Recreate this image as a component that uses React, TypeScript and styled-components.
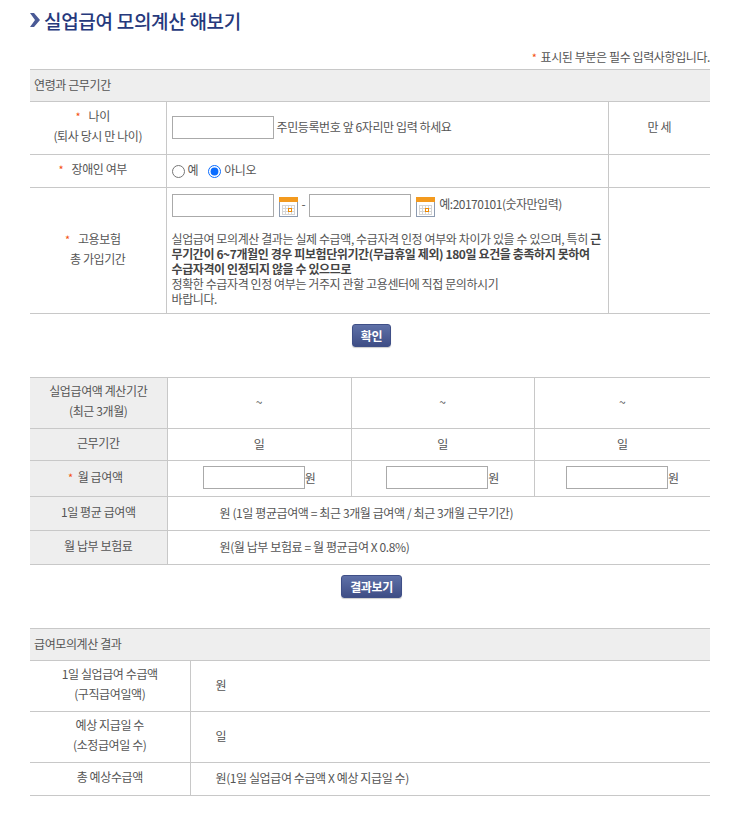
import styled, { createGlobalStyle } from "styled-components";

const GlobalStyle = createGlobalStyle`
  html, body {
    margin: 0;
    padding: 0;
    background: #fff;
  }
  body {
    font-family: "Noto Sans CJK KR", "Noto Sans", sans-serif;
    font-size: 12px;
    letter-spacing: -0.4px;
    color: #555;
  }
`;

const Page = styled.div`
  width: 680px;
  padding: 6px 33px 0 30px;
`;

const Title = styled.h1`
  display: flex;
  align-items: center;
  gap: 4px;
  margin: 0;
  height: 28px;
  font-size: 19px;
  font-weight: 500;
  color: #26397c;
  letter-spacing: -0.3px;
`;

const Notice = styled.p`
  margin: 14px 0 0;
  height: 21px;
  line-height: 18px;
  text-align: right;
`;

const Star = styled.span<{ $gap?: number; $lead?: number }>`
  color: #f4500f;
  font-size: 11px;
  margin-left: ${(p) => p.$lead ?? 0}px;
  margin-right: ${(p) => p.$gap ?? 6}px;
`;

const Table = styled.table`
  width: 680px;
  table-layout: fixed;
  border-collapse: collapse;
  border-top: 1px solid #c8c8c8;
`;

const Row = styled.tr<{ $h: number }>`
  height: ${(p) => p.$h}px;
  border-bottom: 1px solid #c8c8c8;
`;

const Caption = styled.th`
  background: #eee;
  font-weight: 400;
  text-align: left;
  padding: 0 0 2px 4px;
`;

const Label = styled.th<{ $shade?: boolean }>`
  font-weight: 400;
  text-align: center;
  line-height: 20px;
  padding: 0 0 4px;
  border-right: 1px solid #c8c8c8;
  background: ${(p) => (p.$shade ? "#eee" : "transparent")};
`;

const Cell = styled.td<{ $center?: boolean; $pl?: number; $line?: boolean }>`
  padding: 0 0 3px ${(p) => p.$pl ?? 0}px;
  text-align: ${(p) => (p.$center ? "center" : "left")};
  border-right: ${(p) => (p.$line ? "1px solid #c8c8c8" : "none")};
`;

const FieldCell = styled(Cell)`
  padding-bottom: 1px;
`;

const Inline = styled.div`
  display: flex;
  align-items: center;
  gap: 3px;
`;

const CenteredInline = styled(Inline)`
  justify-content: center;
  gap: 0;
`;

const TextInput = styled.input`
  box-sizing: border-box;
  width: 102px;
  height: 23px;
  margin: 0;
  padding: 0 3px;
  border: 1px solid #aaa;
  background: #fff;
`;

const Radio = styled.input`
  width: 13px;
  height: 13px;
  margin: 2px 3px 0 0;
  accent-color: #0a6cff;
`;

const RadioLabel = styled.label`
  display: flex;
  align-items: center;
  margin-right: 7px;
`;

const NudgedText = styled.span`
  margin-top: -2px;
`;

const DateCell = styled.td`
  padding: 5px 4px 6px 5px;
  vertical-align: top;
  border-right: 1px solid #c8c8c8;
`;

const DateInputs = styled(Inline)`
  height: 24px;
  margin-bottom: 14px;
  gap: 0;
`;

const CalIcon = styled.svg`
  margin: 3px 3px 0 5px;
  flex: none;
`;

const Dash = styled.span`
  margin: -4px 4px 0 0;
`;

const Hint = styled.span`
  margin-top: -4px;
  letter-spacing: -0.5px;
`;

const Guide = styled.p`
  margin: 0;
  line-height: 15px;
  white-space: nowrap;
  b {
    font-weight: 700;
    color: #444;
  }
`;

const Actions = styled.div`
  display: flex;
  justify-content: center;
  box-sizing: border-box;
  padding: 10px 0 0 3px;
  height: 63px;
`;

const Button = styled.button`
  height: 23px;
  padding: 0 8px;
  border: 1px solid #3f4f87;
  border-radius: 3px;
  background: linear-gradient(#5f71a8, #3e4d85);
  color: #fff;
  font: 700 12px "Noto Sans CJK KR", sans-serif;
  letter-spacing: -0.4px;
  box-shadow: 0 1px 1px rgba(0, 0, 0, 0.2);
`;

const Calendar = () => (
  <CalIcon width="20" height="20" viewBox="0 0 20 20">
    <rect x="0.5" y="0.5" width="18" height="19" fill="#fff" stroke="#8d9bb0" />
    <rect x="0" y="0" width="19" height="5" fill="#f39a1e" />
    <path d="M3 8.5h13M3 11.5h13M3 14.5h13M3 17.5h13M3.5 8v10M6.5 8v10M9.5 8v10M12.5 8v10M15.5 8v10" stroke="#d5d5d5" />
    <rect x="9.5" y="11.5" width="3" height="3" fill="#fff" stroke="#f08a00" />
  </CalIcon>
);

const Chevron = () => (
  <svg width="10" height="14" viewBox="0 0 10 14">
    <path d="M0 0h4l6 7-6 7H0l5-7z" fill="#4a5a96" />
  </svg>
);

const SalaryField = () => (
  <CenteredInline>
    <TextInput />
    <span>원</span>
  </CenteredInline>
);

export default function App() {
  return (
    <Page>
      <GlobalStyle />
      <Title>
        <Chevron />
        실업급여 모의계산 해보기
      </Title>
      <Notice>
        <Star $gap={4}>*</Star>표시된 부분은 필수 입력사항입니다.
      </Notice>

      <Table>
        <colgroup>
          <col width="136" />
          <col width="442" />
          <col width="102" />
        </colgroup>
        <tbody>
          <Row $h={32}>
            <Caption colSpan={3}>연령과 근무기간</Caption>
          </Row>
          <Row $h={53}>
            <Label>
              <Star $lead={-10}>*</Star> 나이
              <br />
              (퇴사 당시 만 나이)
            </Label>
            <FieldCell $pl={5} $line>
              <Inline>
                <TextInput />
                <NudgedText>주민등록번호 앞 6자리만 입력 하세요</NudgedText>
              </Inline>
            </FieldCell>
            <Cell $center>만 세</Cell>
          </Row>
          <Row $h={33}>
            <Label>
              <Star $lead={-10}>*</Star> 장애인 여부
            </Label>
            <FieldCell $pl={5} $line>
              <Inline>
                <RadioLabel>
                  <Radio type="radio" name="disabled" />
                  <NudgedText>예</NudgedText>
                </RadioLabel>
                <RadioLabel>
                  <Radio type="radio" name="disabled" defaultChecked />
                  <NudgedText>아니오</NudgedText>
                </RadioLabel>
              </Inline>
            </FieldCell>
            <Cell />
          </Row>
          <Row $h={126}>
            <Label>
              <Star $lead={-10}>*</Star> 고용보험
              <br />총 가입기간
            </Label>
            <DateCell>
              <DateInputs>
                <TextInput />
                <Calendar />
                <Dash>-</Dash>
                <TextInput />
                <Calendar />
                <Hint>예:20170101(숫자만입력)</Hint>
              </DateInputs>
              <Guide>
                실업급여 모의계산 결과는 실제 수급액, 수급자격 인정 여부와 차이가 있을 수 있으며, 특히 <b>근</b>
                <br />
                <b>무기간이 6~7개월인 경우 피보험단위기간(무급휴일 제외) 180일 요건을 충족하지 못하여</b>
                <br />
                <b>수급자격이 인정되지 않을 수 있으므로</b>
                <br />
                정확한 수급자격 인정 여부는 거주지 관할 고용센터에 직접 문의하시기
                <br />
                바랍니다.
              </Guide>
            </DateCell>
            <Cell />
          </Row>
        </tbody>
      </Table>

      <Actions>
        <Button>확인</Button>
      </Actions>

      <Table>
        <colgroup>
          <col width="137" />
          <col width="184" />
          <col width="183" />
          <col width="176" />
        </colgroup>
        <tbody>
          <Row $h={51}>
            <Label $shade>
              실업급여액 계산기간
              <br />
              (최근 3개월)
            </Label>
            <Cell $center $line>~</Cell>
            <Cell $center $line>~</Cell>
            <Cell $center>~</Cell>
          </Row>
          <Row $h={32}>
            <Label $shade>근무기간</Label>
            <Cell $center $line>일</Cell>
            <Cell $center $line>일</Cell>
            <Cell $center>일</Cell>
          </Row>
          <Row $h={36}>
            <Label $shade>
              <Star $gap={5} $lead={-6}>*</Star>월 급여액
            </Label>
            <Cell $line><SalaryField /></Cell>
            <Cell $line><SalaryField /></Cell>
            <Cell><SalaryField /></Cell>
          </Row>
          <Row $h={34}>
            <Label $shade>1일 평균 급여액</Label>
            <Cell colSpan={3} $pl={52}>원 (1일 평균급여액 = 최근 3개월 급여액 / 최근 3개월 근무기간)</Cell>
          </Row>
          <Row $h={34}>
            <Label $shade>월 납부 보험료</Label>
            <Cell colSpan={3} $pl={52}>원(월 납부 보험료 = 월 평균급여 X 0.8%)</Cell>
          </Row>
        </tbody>
      </Table>

      <Actions>
        <Button>결과보기</Button>
      </Actions>

      <Table>
        <colgroup>
          <col width="160" />
          <col width="520" />
        </colgroup>
        <tbody>
          <Row $h={32}>
            <Caption colSpan={2}>급여모의계산 결과</Caption>
          </Row>
          <Row $h={51}>
            <Label>
              1일 실업급여 수급액
              <br />
              (구직급여일액)
            </Label>
            <Cell $pl={25}>원</Cell>
          </Row>
          <Row $h={51}>
            <Label>
              예상 지급일 수
              <br />
              (소정급여일 수)
            </Label>
            <Cell $pl={25}>일</Cell>
          </Row>
          <Row $h={33}>
            <Label>총 예상수급액</Label>
            <Cell $pl={25}>원(1일 실업급여 수급액 X 예상 지급일 수)</Cell>
          </Row>
        </tbody>
      </Table>
    </Page>
  );
}
